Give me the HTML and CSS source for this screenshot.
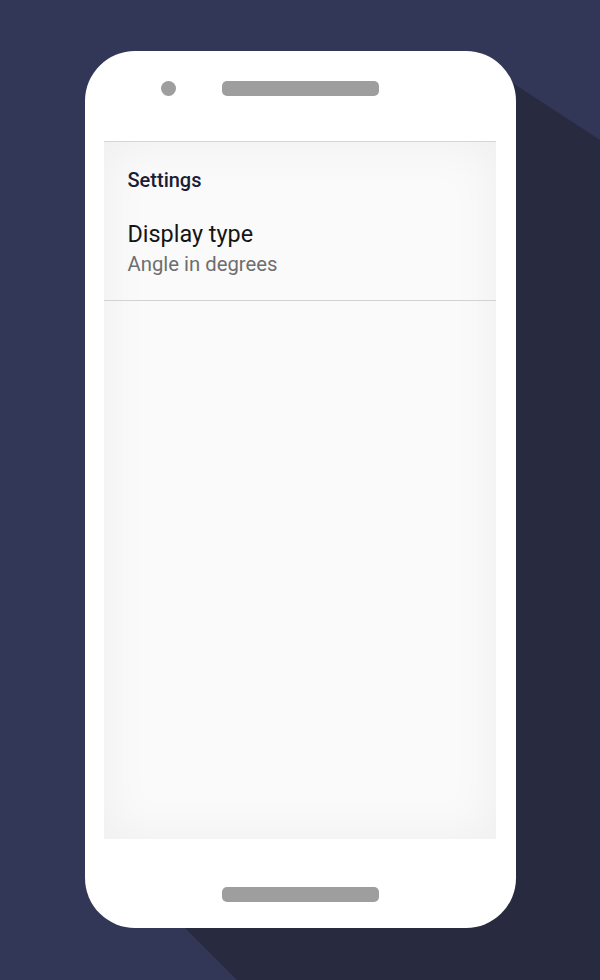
FILE: index.html
```html
<!DOCTYPE html>
<html lang="en">
<head>
<meta charset="utf-8">
<title>Settings</title>
<link rel="stylesheet" href="styles.css">
</head>
<body>
<div class="long-shadow"></div>
<div class="phone">
  <div class="phone-top">
    <span class="camera"></span>
    <span class="speaker"></span>
  </div>
  <div class="screen">
    <div class="prefs">
      <div class="category">Settings</div>
      <div class="pref">
        <div class="pref-title">Display type</div>
        <div class="pref-summary">Angle in degrees</div>
      </div>
    </div>
  </div>
  <div class="phone-bottom">
    <span class="speaker"></span>
  </div>
</div>
</body>
</html>
```
FILE: styles.css
```css
html, body {
  margin: 0;
  padding: 0;
}
body {
  width: 600px;
  height: 980px;
  background: #333757;
  position: relative;
  overflow: hidden;
  font-family: Roboto, "Noto Sans", sans-serif;
  display: flex;
  justify-content: center;
  align-items: flex-start;
  padding-top: 51px;
  box-sizing: border-box;
}
.long-shadow {
  position: absolute;
  left: 0;
  top: 0;
  width: 600px;
  height: 980px;
  background: #282a40;
  clip-path: polygon(505px 78px, 600px 140px, 600px 980px, 237px 980px, 185px 928px);
  z-index: 0;
}
.phone {
  position: relative;
  z-index: 1;
  width: 431px;
  height: 877px;
  background: #ffffff;
  border-radius: 50px;
  display: flex;
  flex-direction: column;
  box-sizing: border-box;
  padding: 30px 20px 26px 19px;
}
.phone-top {
  display: flex;
  align-items: center;
  height: 15px;
  padding-left: 57px;
  gap: 46px;
}
.camera {
  width: 15px;
  height: 15px;
  border-radius: 50%;
  background: #9e9e9e;
}
.speaker {
  width: 157px;
  height: 15px;
  border-radius: 5px;
  background: #9e9e9e;
}
.screen {
  margin-top: 45px;
  height: 698px;
  background: #fafafa;
  border-top: 1px solid #d6d6d6;
  box-sizing: border-box;
  box-shadow: inset 0 0 50px rgba(0, 0, 0, 0.05);
}
.prefs {
  padding: 26px 24px 24px 24px;
  border-bottom: 1px solid #d2d2d2;
}
.category {
  font-size: 20px;
  line-height: 24px;
  font-weight: 500;
  color: #1b1d35;
}
.pref {
  margin-top: 28px;
}
.pref-title {
  font-size: 23.4px;
  line-height: 28px;
  color: #151515;
}
.pref-summary {
  margin-top: 4px;
  font-size: 20.3px;
  line-height: 24px;
  color: #6e6e6e;
}
.phone-bottom {
  margin-top: 48px;
  display: flex;
  justify-content: center;
  padding-left: 1px;
}
```
